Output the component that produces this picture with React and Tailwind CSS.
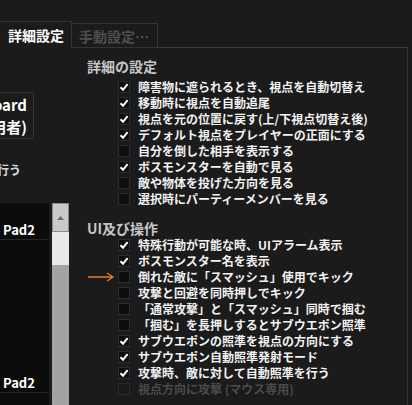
import React from 'react';

const FONT = "font-['Noto_Sans_CJK_JP','Noto_Sans',sans-serif]";

const detailRows = [
  { label: '障害物に遮られるとき、視点を自動切替え', checked: true },
  { label: '移動時に視点を自動追尾', checked: true },
  { label: '視点を元の位置に戻す(上/下視点切替え後)', checked: true },
  { label: 'デフォルト視点をプレイヤーの正面にする', checked: true },
  { label: '自分を倒した相手を表示する', checked: false },
  { label: 'ボスモンスターを自動で見る', checked: true },
  { label: '敵や物体を投げた方向を見る', checked: false },
  { label: '選択時にパーティーメンバーを見る', checked: false },
];

const uiRows = [
  { label: '特殊行動が可能な時、UIアラーム表示', checked: true },
  { label: 'ボスモンスター名を表示', checked: true },
  { label: '倒れた敵に「スマッシュ」使用でキック', checked: false, arrow: true },
  { label: '攻撃と回避を同時押しでキック', checked: false },
  { label: '「通常攻撃」と「スマッシュ」同時で掴む', checked: false },
  { label: '「掴む」を長押しするとサブウエポン照準', checked: false },
  { label: 'サブウエポンの照準を視点の方向にする', checked: true },
  { label: 'サブウエポン自動照準発射モード', checked: true },
  { label: '攻撃時、敵に対して自動照準を行う', checked: true },
  { label: '視点方向に攻撃 (マウス専用)', checked: false, disabled: true },
];

const Checkbox = ({ checked, disabled }) => (
  <div
    className={`w-[12px] h-[12px] shrink-0 border flex items-center justify-center ${
      disabled ? 'border-[#2a2a2a] bg-[#191919]' : 'border-[#2c2c2c] bg-[#0e0e0e]'
    }`}
  >
    {checked && (
      <svg width="10" height="10" viewBox="0 0 10 10">
        <path d="M1.5 5.2 L4 7.8 L8.6 2.2" fill="none" stroke="#fff" strokeWidth="2" />
      </svg>
    )}
  </div>
);

const OptionRow = ({ label, checked, disabled, arrow }) => (
  <div className="flex items-center h-[16px]">
    <div className="w-[31px] shrink-0 flex items-center">
      {arrow && (
        <svg width="27" height="10" viewBox="0 0 27 10" className="ml-[1px]">
          <path d="M0 5 H25 M19 1 L25 5 L19 9" fill="none" stroke="#e8782c" strokeWidth="1.3" />
        </svg>
      )}
    </div>
    <Checkbox checked={checked} disabled={disabled} />
    <span
      className={`ml-[8px] text-[12px] leading-[16px] font-bold whitespace-nowrap ${
        disabled ? 'text-[#4a4a4a]' : 'text-[#f2f2f2]'
      }`}
    >
      {label}
    </span>
  </div>
);

export default function App() {
  return (
    <div className={`w-[412px] h-[405px] overflow-hidden bg-[#1b1b1b] flex flex-col ${FONT}`}>
      {/* Tabs */}
      <div className="mt-[21px] h-[27px] flex shrink-0">
        <div className="w-[72px] border-t border-r border-[#333] flex items-center pl-[8px]">
          <span className="text-[14px] leading-[18px] font-bold text-white">詳細設定</span>
        </div>
        <div className="w-[86px] mt-[2px] border border-[#333] border-l-0 flex items-center pl-[7px]">
          <span className="text-[14px] leading-[18px] font-bold text-[#4e4e4e]">手動設定…</span>
        </div>
        <div className="flex-1 border-b border-[#3a3a3a] mr-[4px]" />
      </div>

      {/* Body */}
      <div className="flex flex-1 min-h-0">
        {/* Left column */}
        <div className="w-[72px] shrink-0 flex flex-col">
          <div className="mt-[44px] w-[34px] h-[47px] border border-l-0 border-[#333] flex flex-col items-end justify-center pr-[6px]">
            <span className="text-[15px] leading-[22px] font-bold text-white whitespace-nowrap">Keyboard</span>
            <span className="text-[15px] leading-[22px] font-bold text-white whitespace-nowrap">(使用者)</span>
          </div>
          <div className="mt-[23px] w-[21px] flex justify-end">
            <span className="text-[12px] leading-[16px] font-bold text-[#d8d8d8] whitespace-nowrap">自動で照準を行う</span>
          </div>
          <div className="mt-[25px] flex flex-1 min-h-0">
            <div className="w-[49px] bg-[#0b0b0b] flex flex-col">
              <div className="h-[37px] border-b border-[#262626] flex items-end pl-[3px] pb-[1px]">
                <span className="text-[13px] leading-[17px] font-bold text-white">Pad2</span>
              </div>
              <div className="flex-1" />
              <div className="h-[20px] border-b border-[#262626] flex items-center pl-[3px] mb-[12px]">
                <span className="text-[13px] leading-[17px] font-bold text-white">Pad2</span>
              </div>
            </div>
            <div className="w-[3px]" />
            <div className="w-[17px] flex flex-col bg-[#a3a3a3]">
              <div className="h-[29px] bg-[#c9c9c9] border border-[#8a8a8a] flex items-center justify-center">
                <svg width="7" height="4" viewBox="0 0 7 4">
                  <path d="M0 4 L3.5 0 L7 4 Z" fill="#6a6a6a" />
                </svg>
              </div>
              <div className="h-[33px] bg-[#e8e8e8]" />
            </div>
          </div>
        </div>

        {/* Right pane */}
        <div className="flex-1 border-r border-[#333] mr-[4px] pl-[15px] pt-[10px]">
          <div className="text-[14px] leading-[16px] font-bold text-[#c6c6c6]">詳細の設定</div>
          <div className="mt-[5px]">
            {detailRows.map((r) => (
              <OptionRow key={r.label} {...r} />
            ))}
          </div>
          <div className="mt-[13px] text-[14px] leading-[16px] font-bold text-[#c6c6c6]">UI及び操作</div>
          <div className="mt-[1px]">
            {uiRows.map((r) => (
              <OptionRow key={r.label} {...r} />
            ))}
          </div>
        </div>
      </div>
    </div>
  );
}
